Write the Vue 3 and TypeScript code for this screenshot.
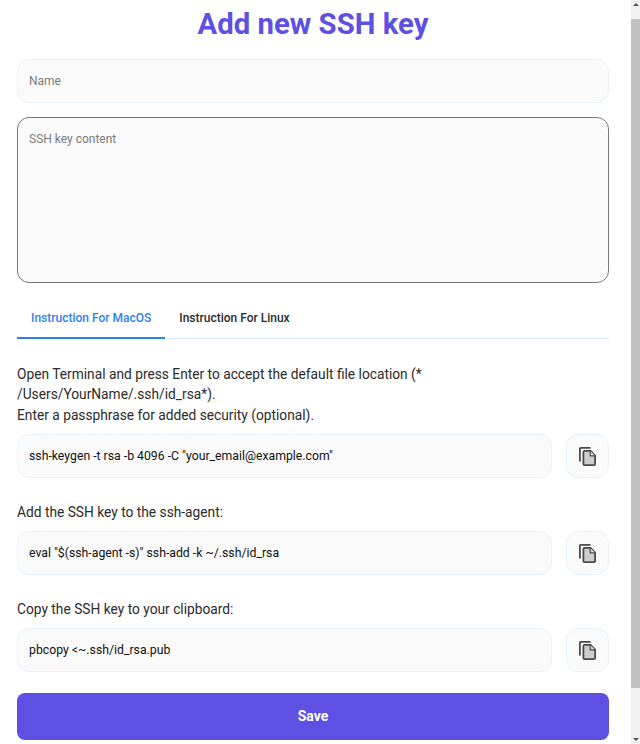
<script setup lang="ts">
import { ref } from 'vue'
const tab = ref('mac')
const steps = [
  { text: ['Open Terminal and press Enter to accept the default file location (*', '/Users/YourName/.ssh/id_rsa*).', 'Enter a passphrase for added security (optional).'], code: 'ssh-keygen -t rsa -b 4096 -C "your_email@example.com"' },
  { text: ['Add the SSH key to the ssh-agent:'], code: 'eval "$(ssh-agent -s)" ssh-add -k ~/.ssh/id_rsa' },
  { text: ['Copy the SSH key to your clipboard:'], code: 'pbcopy <~.ssh/id_rsa.pub' },
]
</script>

<template>
  <div class="page">
    <main class="content">
      <h1 class="title">Add new SSH key</h1>
      <input class="field" placeholder="Name" />
      <textarea class="field area" placeholder="SSH key content"></textarea>
      <div class="tabs">
        <button class="tab" :class="{ active: tab === 'mac' }" @click="tab = 'mac'">Instruction For MacOS</button>
        <button class="tab" :class="{ active: tab === 'linux' }" @click="tab = 'linux'">Instruction For Linux</button>
      </div>
      <section v-for="step in steps" :key="step.code" class="step">
        <p class="desc"><span v-for="line in step.text" :key="line" class="line">{{ line }}</span></p>
        <div class="row">
          <div class="code">{{ step.code }}</div>
          <button class="copy" aria-label="Copy">
            <svg width="17" height="19" viewBox="0 0 17 19">
              <path d="M1.800 0H11.500V1.800H1.800V14.500H0V1.800C0 .8.800 0 1.800 0Z" fill="#4a4a4a" />
              <path d="M5.500 3.900H11.500L16.100 8.500V17C16.100 17.700 15.600 18.100 15 18.100H5.500C4.800 18.100 4.400 17.700 4.400 17V5C4.400 4.300 4.800 3.900 5.500 3.900Z" fill="#cdcdcd" stroke="#4a4a4a" stroke-width="1.800" />
              <path d="M11.200 3.900V8.800H16.100" fill="#dedede" stroke="#4a4a4a" stroke-width="1.200" />
            </svg>
          </button>
        </div>
      </section>
      <button class="save">Save</button>
    </main>
    <aside class="scrollbar">
      <span class="arrow up"></span>
      <span class="thumb-wrap"><span class="thumb"></span></span>
      <span class="arrow down"></span>
    </aside>
  </div>
</template>

<style>
html, body { margin: 0; overflow: hidden; background: #fff; }
</style>

<style scoped>
.page {
  display: flex;
  height: 744px;
  overflow: hidden;
  font-family: Roboto, "Liberation Sans", sans-serif;
  color: #212121;
}
.content {
  flex: 1;
  min-width: 0;
  box-sizing: border-box;
  padding: 0 22px 0 17px;
  display: flex;
  flex-direction: column;
}
.title {
  margin: 6px 0 0;
  height: 53px;
  flex: none;
  line-height: 36px;
  font-size: 29.3px;
  font-weight: 700;
  text-align: center;
  color: #5e50e2;
}
.field {
  box-sizing: border-box;
  display: block;
  width: 100%;
  height: 44px;
  padding: 0 11px;
  background: #fafafa;
  border: 1px solid #e8f2fd;
  border-radius: 12px;
  font: 400 12px/18px Roboto, sans-serif;
  outline: none;
  flex: none;
}
.field::placeholder { color: #7a7a7a; opacity: 1; }
.area {
  margin-top: 14px;
  height: 166px;
  padding: 12px 11px;
  border-color: #767676;
  resize: none;
}
.tabs {
  display: flex;
  margin-top: 15px;
  border-bottom: 1px solid #d6e8fb;
  height: 41px;
  flex: none;
  box-sizing: border-box;
}
.tab {
  padding: 0 14px;
  height: 41px;
  border: 0;
  border-bottom: 2px solid transparent;
  background: none;
  font: 500 12px/1 Roboto, sans-serif;
  color: #2b2b2b;
}
.tab.active { color: #2f80ed; border-bottom-color: #2f80ed; }
.step { margin-top: 24.500px; flex: none; }
.step + .step { margin-top: 23.500px; }
.desc {
  margin: 0 0 9px;
  font-size: 13.750px;
  line-height: 20.500px;
  max-width: 440px;
  color: #2b2b2b;
}
.line { display: block; }
.row { display: flex; gap: 14px; }
.code {
  flex: 1;
  box-sizing: border-box;
  height: 44px;
  padding: 0 11px;
  display: flex;
  align-items: center;
  background: #fafafa;
  border: 1px solid #e8f2fd;
  border-radius: 12px;
  font-size: 12.250px;
  font-weight: 400;
  color: #111;
}
.copy {
  box-sizing: border-box;
  width: 43px;
  height: 44px;
  padding: 0;
  display: flex;
  align-items: center;
  justify-content: center;
  background: #fafafa;
  border: 1px solid #e8f2fd;
  border-radius: 12px;
}
.save {
  margin-top: 21px;
  height: 47px;
  padding: 0 0 2px;
  flex: none;
  border: 0;
  border-radius: 8px;
  background: #5e50e2;
  color: #fff;
  font: 700 14px/1 Roboto, sans-serif;
}
.scrollbar {
  width: 9px;
  flex: none;
  background: #f1f1f1;
  display: flex;
  flex-direction: column;
  align-items: center;
}
.arrow { width: 0; height: 0; flex: none; border-left: 3px solid transparent; border-right: 3px solid transparent; }
.arrow.up { margin-top: 3px; border-bottom: 3px solid #505050; }
.arrow.down { margin-bottom: 3px; border-top: 3px solid #505050; }
.thumb-wrap { flex: 1; width: 100%; padding-top: 13px; padding-bottom: 50px; box-sizing: border-box; display: flex; }
.thumb { flex: 1; background: #c1c1c1; }
</style>
